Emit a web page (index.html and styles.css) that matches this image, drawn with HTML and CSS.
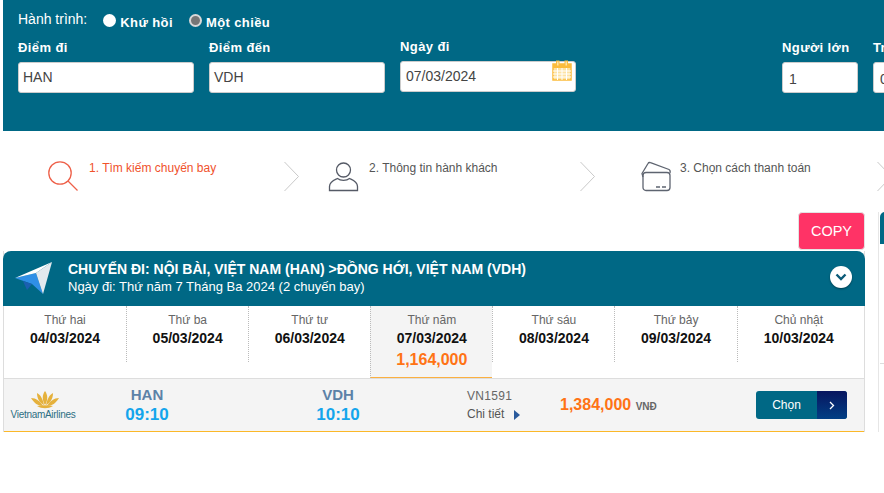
FILE: index.html
```html
<!DOCTYPE html>
<html lang="en">
<head>
  <meta charset="UTF-8">
  <meta name="viewport" content="width=device-width, initial-scale=1.0">
  <title>Chọn chuyến bay</title>
  <link rel="stylesheet" href="styles.css">
</head>
<body>

  <!-- Search form -->
  <header class="search-box">
    <div class="trip-type">
      <span class="trip-label">Hành trình:</span>
      <label class="radio"><span class="radio-dot"></span>Khứ hồi</label>
      <label class="radio"><span class="radio-dot checked"></span>Một chiều</label>
    </div>
    <div class="fields">
      <div class="field">
        <label>Điểm đi</label>
        <div class="input">HAN</div>
      </div>
      <div class="field">
        <label>Điểm đến</label>
        <div class="input">VDH</div>
      </div>
      <div class="field date-field">
        <label>Ngày đi</label>
        <div class="input">07/03/2024
          <svg class="calendar" width="20" height="21" viewBox="0 0 20 21">
            <rect x="1" y="4" width="18" height="16" fill="#fde3a4" stroke="#fbbc3c" stroke-width="1.5"/>
            <rect x="1" y="4" width="18" height="4" fill="#fbbc3c"/>
            <path d="M1 11h18M1 14h18M1 17h18M5.500 8v12M10 8v12M14.500 8v12" stroke="#fff" stroke-width="1"/>
            <rect x="4.500" y="1" width="2.500" height="5" fill="#fde3a4" stroke="#fbbc3c"/>
            <rect x="13" y="1" width="2.500" height="5" fill="#fde3a4" stroke="#fbbc3c"/>
          </svg>
        </div>
      </div>
      <div class="field small-field adult-field">
        <label>Người lớn</label>
        <div class="input">1</div>
      </div>
      <div class="field small-field">
        <label>Trẻ em</label>
        <div class="input">0</div>
      </div>
    </div>
  </header>

  <!-- Steps -->
  <div class="steps">
    <div class="step active step-one">
      <svg width="31" height="31" viewBox="0 0 31 31" fill="none" stroke="#ee6049" stroke-width="1.300">
        <circle cx="12" cy="12" r="11.200"/>
        <path d="M20 20l9.500 9.500"/>
      </svg>
      <span>1. Tìm kiếm chuyến bay</span>
    </div>
    <svg class="step-arrow" width="16" height="31" viewBox="0 0 16 31" fill="none" stroke="#c9c9c9"><path d="M.5 1l14 14.500L.5 30"/></svg>
    <div class="step step-two">
      <svg width="31" height="31" viewBox="0 0 31 31" fill="none" stroke="#555a66" stroke-width="1.300">
        <circle cx="15.500" cy="9" r="7"/>
        <path d="M1.500 29.500v-4c0-5 6-7 8-8 3 2.500 9 2.500 12 0 2 1 8 3 8 8v4z"/>
      </svg>
      <span>2. Thông tin hành khách</span>
    </div>
    <svg class="step-arrow" width="16" height="31" viewBox="0 0 16 31" fill="none" stroke="#c9c9c9"><path d="M.5 1l14 14.500L.5 30"/></svg>
    <div class="step step-three">
      <svg width="31" height="31" viewBox="0 0 31 31" fill="none" stroke="#5e6470" stroke-width="1.300">
        <rect x="2" y="11.500" width="27" height="18" rx="3"/>
        <path d="M2 16L1 12.500 7 2.500c.500-1 1.500-1.200 2.500-.800L28 8.500c1 .500 1.500 1.500 1 3.500"/>
        <path d="M15 26h4M21 26h4"/>
      </svg>
      <span>3. Chọn cách thanh toán</span>
    </div>
    <svg class="step-arrow" width="16" height="31" viewBox="0 0 16 31" fill="none" stroke="#c9c9c9"><path d="M.5 1l14 14.500L.5 30"/></svg>
  </div>

  <div class="content">
    <div class="left-col">
      <div class="copy-row">
        <button class="copy-btn">COPY</button>
      </div>

      <div class="flight-panel">
        <div class="panel-head">
          <svg class="plane" width="38" height="33" viewBox="0 0 38 33">
            <path d="M0 16L21 11l7 21-11-10z" fill="#2f8fe6"/>
            <path d="M8 19l4 9 5-6z" fill="#1b5fb0"/>
            <path d="M37 0L21 11l7 21z" fill="#e4e9ee"/>
            <path d="M37 0L0 16l21-5z" fill="#fff"/>
          </svg>
          <div class="panel-title">
            <h2>CHUYẾN ĐI: NỘI BÀI, VIỆT NAM (HAN) &gt;ĐỒNG HỚI, VIỆT NAM (VDH)</h2>
            <p>Ngày đi: Thứ năm 7 Tháng Ba 2024 (2 chuyến bay)</p>
          </div>
          <span class="toggle">
            <svg width="12" height="8" viewBox="0 0 12 8" fill="none" stroke="#0b5a78" stroke-width="2.400"><path d="M1.500 1.500L6 6l4.500-4.500"/></svg>
          </span>
        </div>

        <div class="days">
          <div class="day"><span>Thứ hai</span><b>04/03/2024</b></div>
          <div class="day"><span>Thứ ba</span><b>05/03/2024</b></div>
          <div class="day"><span>Thứ tư</span><b>06/03/2024</b></div>
          <div class="day selected"><span>Thứ năm</span><b>07/03/2024</b><em>1,164,000</em></div>
          <div class="day"><span>Thứ sáu</span><b>08/03/2024</b></div>
          <div class="day"><span>Thứ bảy</span><b>09/03/2024</b></div>
          <div class="day"><span>Chủ nhật</span><b>10/03/2024</b></div>
        </div>

        <div class="flight-row">
          <div class="airline">
            <svg width="28" height="18" viewBox="0 0 28 18" fill="#e5b13c">
              <path d="M14 0c3 4 3 9 0 14-3-5-3-10 0-14z"/>
              <path d="M6 2c4 2 6 7 7 12-4-2-7-6-7-12z"/>
              <path d="M22 2c-4 2-6 7-7 12 4-2 7-6 7-12z"/>
              <path d="M0 7c5 0 9 3 12 8-5 0-9-3-12-8z"/>
              <path d="M28 7c-5 0-9 3-12 8 5 0 9-3 12-8z"/>
              <path d="M6 15c5-1 11-1 16 0-5 3-11 3-16 0z"/>
            </svg>
            <span>VietnamAirlines</span>
          </div>
          <div class="place from"><span>HAN</span><b>09:10</b></div>
          <div class="place to"><span>VDH</span><b>10:10</b></div>
          <div class="flight-no">
            <span>VN1591</span>
            <a>Chi tiết <i class="arrow"></i></a>
          </div>
          <div class="price">1,384,000 <small>VNĐ</small></div>
          <button class="choose"><span>Chọn</span><i>
            <svg width="6" height="9" viewBox="0 0 6 9" fill="none" stroke="#fff" stroke-width="1.300"><path d="M1 1l3.500 3.500L1 8"/></svg>
          </i></button>
        </div>
      </div>
    </div>

    <aside class="right-col">
      <div class="right-head"></div>
      <div class="right-line"></div>
    </aside>
  </div>

</body>
</html>
```

FILE: styles.css
```css
* {
  margin: 0;
  padding: 0;
  box-sizing: border-box;
}

html, body {
  height: 493px;
  overflow: hidden;
}

body {
  font-family: "Liberation Sans", Arial, sans-serif;
  background-color: #fff;
  color: #555;
  padding-left: 3px;
}

/* Search form */
.search-box {
  height: 131px;
  background-color: #006885;
  color: #fff;
  padding: 11px 0 0 15px;
  overflow: hidden;
}

.trip-type {
  display: flex;
  height: 24px;
  align-items: flex-start;
}

.trip-label {
  font-size: 14px;
  line-height: 16px;
}

.radio {
  display: flex;
  align-items: center;
  font-size: 13px;
  font-weight: bold;
  line-height: 16px;
  margin-left: 16px;
  padding-top: 4px;
  letter-spacing: .4px;
}

.radio-dot {
  width: 13px;
  height: 13px;
  border-radius: 50%;
  background-color: #fff;
  margin: -5px 4px 0 0;
}

.radio-dot.checked {
  background-color: #767676;
  border: 2px solid #d8d8d8;
}

.fields {
  display: flex;
  gap: 15px;
  width: 1000px;
}

.field {
  width: 176px;
}

.field label {
  display: block;
  font-size: 13px;
  font-weight: bold;
  line-height: 16px;
  height: 27px;
  padding-top: 5px;
  letter-spacing: .4px;
}

.input {
  position: relative;
  height: 31px;
  background-color: #fff;
  border: 1px solid #ccc;
  border-radius: 3px;
  color: #444;
  font-size: 14px;
  line-height: 29px;
  padding-left: 4px;
}

.date-field {
  margin-top: -1px;
}

.date-field .input {
  padding-left: 5px;
}

.calendar {
  position: absolute;
  right: 3px;
  top: -2px;
}

.small-field {
  width: 76px;
}

.small-field .input {
  padding: 2px 0 0 6px;
}

.adult-field {
  margin-left: 191px;
}

/* Steps */
.steps {
  display: flex;
  align-items: flex-start;
  padding: 30px 0 0 45px;
  height: 81px;
  width: 900px;
}

.step {
  display: flex;
  align-items: flex-start;
  font-size: 12px;
  line-height: 14px;
}

.step span {
  margin: 0 0 0 10px;
}

.step.active {
  color: #f0522c;
}

.step-one {
  width: 236px;
}

.step-two {
  width: 252px;
  margin-left: 28px;
}

.step-three {
  width: 236px;
  margin-left: 45px;
}

.step-three span {
  margin-left: 8px;
}

.step-arrow {
  flex-shrink: 0;
}

/* Main content */
.content {
  display: flex;
  gap: 13px;
}

.left-col {
  width: 862px;
  flex-shrink: 0;
}

.copy-row {
  display: flex;
  justify-content: flex-end;
  height: 39px;
}

.copy-btn {
  width: 67px;
  height: 38px;
  background-color: #ff3366;
  border: 1px solid #e3e3e3;
  border-radius: 4px;
  color: #fff;
  font-family: "Liberation Sans", Arial, sans-serif;
  font-size: 14.5px;
}

.right-col {
  width: 60px;
  height: 220px;
  border-left: 1px solid #e6e6e6;
  padding-left: 1px;
  flex-shrink: 0;
}

.right-head {
  height: 32px;
  background-color: #006885;
  border-radius: 5px 0 0 0;
}

.right-line {
  height: 1px;
  margin-top: 119px;
  background-color: #ddd;
}

.flight-panel {
  border-right: 1px solid #ddd;
  border-left: 1px solid #ddd;
}

.panel-head {
  display: flex;
  align-items: center;
  height: 55px;
  margin: 0 -1px;
  background-color: #006885;
  border-radius: 8px 8px 0 0;
  color: #fff;
  padding: 0 13px 0 12px;
}

.plane {
  flex-shrink: 0;
  margin-bottom: 1px;
}

.panel-title {
  margin: -2px 0 0 15px;
  flex: 1;
}

.panel-title h2 {
  font-size: 14px;
  line-height: 18px;
}

.panel-title p {
  font-size: 13px;
  line-height: 18px;
}

.toggle {
  display: flex;
  align-items: center;
  justify-content: center;
  width: 22px;
  height: 22px;
  background-color: #fff;
  border-radius: 50%;
  box-shadow: 0 1px 2px rgba(0, 0, 0, .4);
  margin-top: -3px;
}

/* Week tabs */
.days {
  display: grid;
  grid-template-columns: repeat(6, 122.1px) 1fr;
  height: 72px;
}

.day {
  position: relative;
  display: flex;
  flex-direction: column;
  align-items: center;
  height: 56px;
  padding-top: 7px;
  border-left: 1px dotted #bbb;
  font-size: 12px;
}

.day:first-child {
  border-left: none;
}

.day:last-child span,
.day:last-child b {
  margin-right: 4px;
}

.day span {
  line-height: 14px;
  color: #666;
}

.day b {
  margin-top: 3px;
  font-size: 14px;
  line-height: 16px;
  color: #111;
}

.day em {
  margin-top: 6px;
  font-style: normal;
  font-weight: bold;
  font-size: 16px;
  line-height: 16px;
  color: #ff7315;
}

.day.selected {
  height: 72px;
  background-color: #f4f4f4;
  border-bottom: 1px solid #fbb040;
}

/* Flight row */
.flight-row {
  display: flex;
  height: 54px;
  background-color: #f4f4f4;
  border-top: 1px solid #ddd;
  border-bottom: 1px solid #fbb829;
  align-items: center;
}

.airline {
  display: flex;
  flex-direction: column;
  align-items: center;
  width: 80px;
  padding: 1px 0 0 4px;
}

.airline svg {
  margin-left: -2px;
}

.airline span {
  margin-right: 6px;
  font-size: 10px;
  line-height: 11px;
  letter-spacing: -.3px;
  color: #2d6f83;
}

.place {
  display: flex;
  flex-direction: column;
  align-items: center;
  width: 80px;
}

.place span {
  font-size: 15px;
  font-weight: bold;
  line-height: 17px;
  margin-bottom: 2px;
  color: #5c82a8;
}

.place b {
  font-size: 17px;
  line-height: 20px;
  color: #14a5ec;
}

.from {
  margin-left: 23px;
}

.to {
  margin-left: 111px;
}

.flight-no {
  display: flex;
  flex-direction: column;
  margin: 2px 0 0 89px;
  width: 93px;
  font-size: 12px;
}

.flight-no span {
  line-height: 16px;
  letter-spacing: .3px;
  color: #666;
}

.flight-no a {
  line-height: 20px;
  color: #555;
}

.arrow {
  display: inline-block;
  margin-left: 6px;
  border-left: 6px solid #2a5a9c;
  border-top: 5px solid transparent;
  border-bottom: 5px solid transparent;
  vertical-align: -2px;
}

.price {
  width: 196px;
  font-size: 16px;
  font-weight: bold;
  color: #ff7315;
}

.price small {
  font-size: 10px;
  color: #666;
}

.choose {
  display: flex;
  flex-shrink: 0;
  width: 91px;
  height: 28px;
  border: none;
  border-radius: 3px;
  overflow: hidden;
  background-color: #006885;
  font-family: "Liberation Sans", Arial, sans-serif;
  color: #fff;
  font-size: 12px;
}

.choose span {
  width: 61px;
  line-height: 28px;
}

.choose i {
  display: flex;
  align-items: center;
  justify-content: center;
  width: 30px;
  height: 28px;
  background: linear-gradient(#08155f, #013f85);
}
```
